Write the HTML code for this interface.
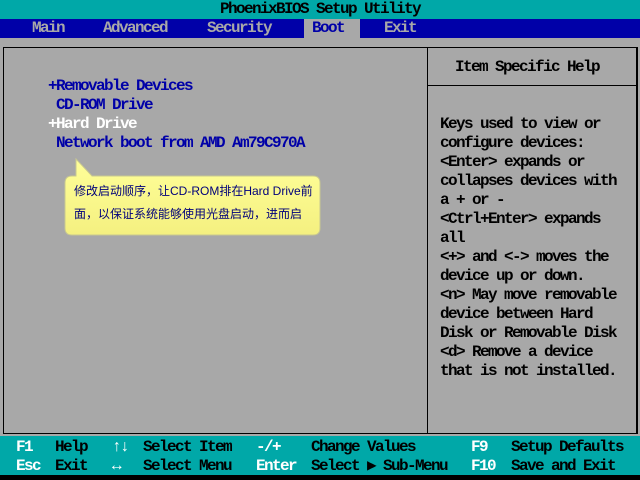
<!DOCTYPE html>
<html><head><meta charset="utf-8"><style>
*{margin:0;padding:0}
body{width:640px;height:480px;background:#a8a8a8;position:relative;overflow:hidden;font-family:"Liberation Mono",monospace;font-size:16px;letter-spacing:-1.6px;font-weight:bold}
.t{position:absolute;white-space:pre;line-height:19px;height:19px;top:1px}
.b{color:#0000a8}.w{color:#fff}.k{color:#000}.g{color:#a8a8a8}
</style></head><body>
<div style="position:absolute;left:0;top:0;width:640px;height:19px;background:#00a8a8"></div>
<div class="t k" style="left:0;width:640px;text-align:center;top:0">PhoenixBIOS Setup Utility</div>
<div style="position:absolute;left:0;top:19px;width:640px;height:19px;background:#0000a8"></div>
<div style="position:absolute;left:304px;top:19px;width:56px;height:19px;background:#a8a8a8"></div>
<div class="t g" style="left:32px;top:19px">Main</div>
<div class="t g" style="left:103px;top:19px">Advanced</div>
<div class="t g" style="left:207px;top:19px">Security</div>
<div class="t b" style="left:312px;top:19px">Boot</div>
<div class="t g" style="left:384px;top:19px">Exit</div>
<div style="position:absolute;left:3px;top:47px;width:632px;height:385px;border:1px solid #000;border-width:1px 2px 1px 1px"></div>
<div style="position:absolute;left:427px;top:47px;width:1px;height:386px;background:#000"></div>
<div style="position:absolute;left:428px;top:85px;width:208px;height:1px;background:#000"></div>
<div class="t k" style="left:455px;top:58px">Item Specific Help</div>
<div class="t b" style="left:48px;top:77px">+Removable Devices</div>
<div class="t b" style="left:48px;top:96px"> CD-ROM Drive</div>
<div class="t w" style="left:48px;top:115px">+Hard Drive</div>
<div class="t b" style="left:48px;top:134px"> Network boot from AMD Am79C970A</div>
<div class="t k" style="left:440px;top:115px">Keys used to view or
configure devices:
&lt;Enter&gt; expands or
collapses devices with
a + or -
&lt;Ctrl+Enter&gt; expands
all
&lt;+&gt; and &lt;-&gt; moves the
device up or down.
&lt;n&gt; May move removable
device between Hard
Disk or Removable Disk
&lt;d&gt; Remove a device
that is not installed.</div>
<svg style="position:absolute;left:60px;top:158px" width="270" height="84"><defs><linearGradient id="gr" x1="0" y1="0" x2="0" y2="1"><stop offset="0" stop-color="#ffff99"/><stop offset="1" stop-color="#f4f080"/></linearGradient></defs>
<path d="M16 1 L16 18 L12 18 Q5 18 5 25 L5 70 Q5 77 12 77 L253 77 Q260 77 260 70 L260 25 Q260 18 253 18 L32 18 Z" fill="url(#gr)" stroke="#c8c890" stroke-width="1"/></svg>
<div style="position:absolute;left:74px;top:180px;line-height:23px;font-family:'Liberation Sans','Noto Sans CJK SC',sans-serif;font-size:12px;letter-spacing:0;font-weight:normal;color:#00007a;white-space:pre">修改启动顺序，让CD-ROM排在Hard Drive前
面，以保证系统能够使用光盘启动，进而启</div>
<div style="position:absolute;left:0;top:436px;width:640px;height:39px;background:#00a8a8"></div>
<div style="position:absolute;left:0;top:475px;width:640px;height:5px;background:#000"></div>
<div class="t w" style="left:16px;top:438px">F1</div><div class="t k" style="left:55px;top:438px">Help</div>
<div class="t w" style="left:112px;top:438px">↑↓</div><div class="t k" style="left:143px;top:438px">Select Item</div>
<div class="t w" style="left:256px;top:438px">-/+</div><div class="t k" style="left:311px;top:438px">Change Values</div>
<div class="t w" style="left:471px;top:438px">F9</div><div class="t k" style="left:511px;top:438px">Setup Defaults</div>
<div class="t w" style="left:16px;top:457px">Esc</div><div class="t k" style="left:55px;top:457px">Exit</div>
<div class="t w" style="left:112px;top:457px">↔</div><div class="t k" style="left:143px;top:457px">Select Menu</div>
<div class="t w" style="left:256px;top:457px">Enter</div><div class="t k" style="left:311px;top:457px">Select ▶ Sub-Menu</div>
<div class="t w" style="left:471px;top:457px">F10</div><div class="t k" style="left:511px;top:457px">Save and Exit</div>
</body></html>
